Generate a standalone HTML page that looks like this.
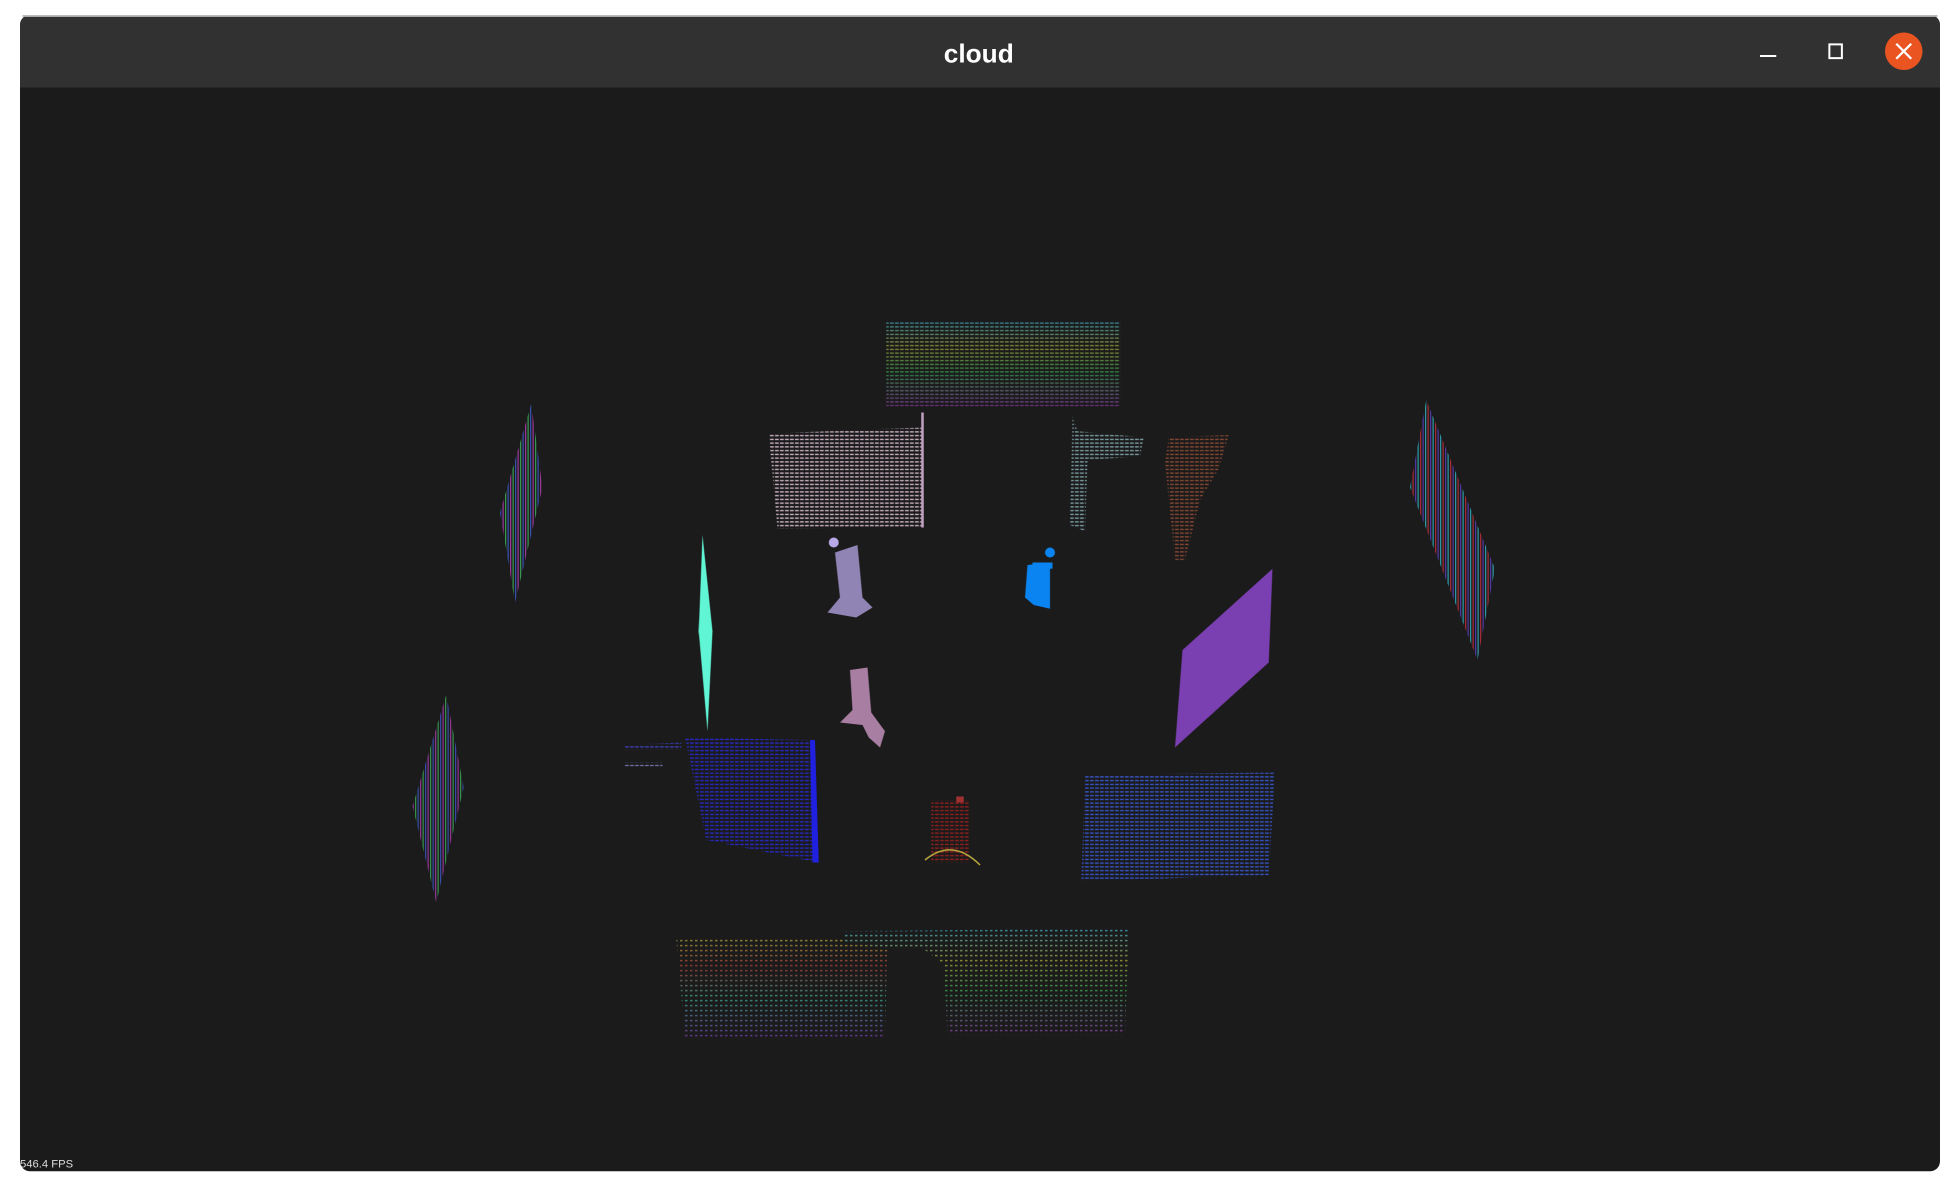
<!DOCTYPE html>
<html><head><meta charset="utf-8"><style>
html,body{margin:0;padding:0;background:#fff;width:1960px;height:1190px;overflow:hidden}
svg{display:block}
</style></head><body>
<svg width="1960" height="1190" viewBox="0 0 1568 952" preserveAspectRatio="none" xmlns="http://www.w3.org/2000/svg">
<defs>
<pattern id="hl" width="4" height="3" patternUnits="userSpaceOnUse"><rect width="3" height="1" fill="#fff"/></pattern>
<pattern id="rb" width="6" height="4" patternUnits="userSpaceOnUse"><rect width="1" height="4" fill="#c040c0"/><rect x="2" width="1" height="4" fill="#40c060"/><rect x="4" width="1" height="4" fill="#4060e0"/></pattern>
<pattern id="rb2" width="6" height="4" patternUnits="userSpaceOnUse"><rect width="1" height="4" fill="#30c0d0"/><rect x="2" width="1" height="4" fill="#d03040"/><rect x="4" width="1" height="4" fill="#6040d0"/></pattern>
<pattern id="dots" width="4" height="4" patternUnits="userSpaceOnUse"><rect width="2" height="1" fill="#fff"/></pattern>
<linearGradient id="g1" x1="0" y1="0" x2="0" y2="1"><stop offset="0" stop-color="#40c0e0"/><stop offset=".3" stop-color="#c0c040"/><stop offset=".6" stop-color="#40c060"/><stop offset="1" stop-color="#a040c0"/></linearGradient>
<linearGradient id="g2" x1="0" y1="0" x2="0" y2="1"><stop offset="0" stop-color="#c0c040"/><stop offset=".3" stop-color="#c04040"/><stop offset=".6" stop-color="#40c0a0"/><stop offset="1" stop-color="#8040c0"/></linearGradient>
<mask id="mh"><rect width="1568" height="952" fill="url(#hl)"/></mask>
<mask id="md"><rect width="1568" height="952" fill="url(#dots)"/></mask>
</defs>
<rect x="16" y="12" width="1536" height="925" rx="8" fill="#1b1b1b"/>
<path d="M16 20 a8 8 0 0 1 8 -8 H1544 a8 8 0 0 1 8 8 V70 H16 Z" fill="#323132"/>
<rect x="18" y="12" width="1532" height="1.5" fill="#bbb"/>
<text x="783" y="50" font-family="Liberation Sans, sans-serif" font-weight="bold" font-size="21" fill="#fff" text-anchor="middle">cloud</text>
<rect x="1408" y="44" width="13" height="1.6" fill="#fff"/>
<rect x="1463.5" y="35.5" width="10" height="11" fill="none" stroke="#fff" stroke-width="1.6"/>
<circle cx="1523" cy="41" r="15" fill="#e95420"/>
<path d="M1517 35 L1529 47 M1529 35 L1517 47" stroke="#fff" stroke-width="1.8"/>
<text x="16" y="934" font-family="Liberation Sans, sans-serif" font-size="9" fill="#ddd">546.4 FPS</text>

<g mask="url(#mh)">
<rect x="709" y="257" width="187" height="68" fill="url(#g1)" opacity=".7"/>
<polygon points="615,347 738,342 739,422 622,423" fill="#dcc0d4"/>
<polygon points="858,333 862,345 915,350 912,365 870,368 868,425 856,420" fill="#90b8c0" opacity=".9"/>
<polygon points="935,350 983,348 975,375 960,400 948,448 940,448 935,400 932,370" fill="#b05a40" opacity=".8"/>
<polygon points="868,620 1020,618 1015,700 865,705" fill="#3a5ad8"/>
<polygon points="548,590 650,592 654,690 565,672" fill="#2a2ad8"/>
<polygon points="500,596 545,594 545,600 500,600" fill="#4040c0"/>
<polygon points="500,610 530,610 530,613 500,613" fill="#8080c0"/>
<rect x="745" y="640" width="30" height="50" fill="#a02020"/>
</g>
<polygon points="648,592 652,592 655,690 650,690" fill="#2020e0"/>
<rect x="737" y="330" width="2" height="92" fill="#c0a0c0"/>
<g mask="url(#md)" opacity=".8">
<polygon points="541,752 710,750 708,830 548,830" fill="url(#g2)"/>
<polygon points="676,745 903,743 900,828 758,828 755,772 740,760 676,755" fill="url(#g1)"/>
</g>
<polygon points="425,323 434,390 412,482 400,410" fill="url(#rb)" opacity=".75"/>
<polygon points="357,556 371,630 349,722 330,645" fill="url(#rb)" opacity=".7"/>
<polygon points="1141,320 1196,455 1182,528 1128,390" fill="url(#rb2)" opacity=".75"/>
<polygon points="562,428 570,505 566,585 559,505" fill="#5ff5d5"/>
<polygon points="1018,455 1015,530 940,598 946,520" fill="#7a3fb0"/>
<path d="M822 452 L840 450 L840 487 L827 484 L820 478 Z" fill="#0a84f0"/>
<circle cx="840" cy="442" r="4" fill="#0a84f0"/>
<rect x="826" y="450" width="16" height="5" fill="#0a84f0"/>
<path d="M668 442 L686 436 L690 478 L698 486 L685 494 L662 490 L672 478 Z" fill="#b8a8e8" opacity=".75"/>
<circle cx="667" cy="434" r="4" fill="#b8a8e8"/>
<path d="M680 536 L694 534 L697 570 L708 585 L704 598 L695 590 L690 580 L672 578 L682 568 Z" fill="#d8a0d0" opacity=".75"/>
<path d="M740 688 Q762 670 784 692" stroke="#c0b040" stroke-width="1.2" fill="none"/>
<rect x="765" y="637" width="6" height="5" fill="#a03030"/>
</svg>
</body></html>
